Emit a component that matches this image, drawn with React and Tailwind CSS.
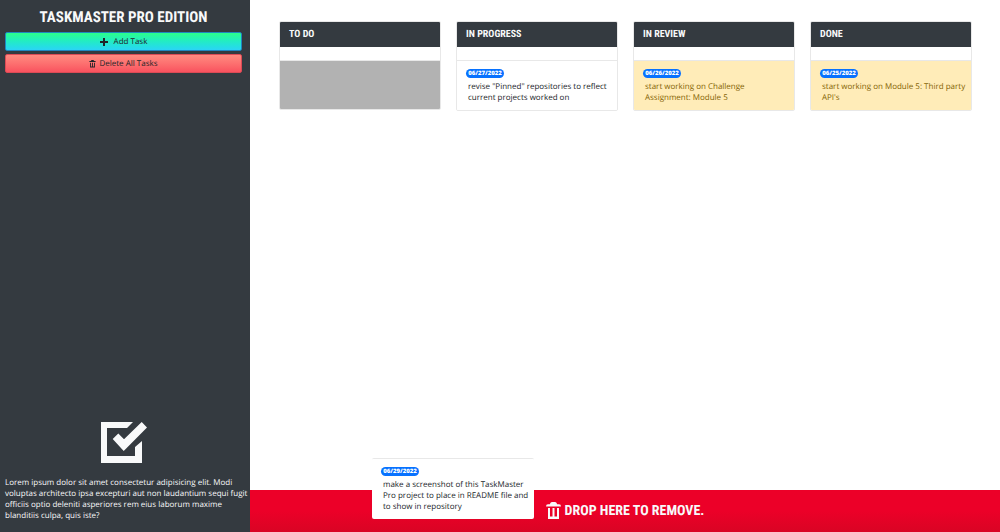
const DISPLAY = "font-['Roboto_Condensed','Liberation_Sans_Narrow','Liberation_Sans',sans-serif] font-bold uppercase";

function TrashIcon({ className }) {
  return (
    <svg viewBox="0 0 15 18" fill="currentColor" aria-hidden="true" className={className}>
      <path d="M0 4.4Q0 2.2 2 2.2H3.8Q4.6 0 6 0H9Q10.4 0 11.2 2.2H13Q15 2.2 15 4.4Z" />
      <path d="M2 6H4V14.5H6.5V6H8.5V14.5H11V6H13V17H2Z" />
    </svg>
  );
}

function PlusIcon({ className }) {
  return (
    <svg viewBox="0 0 8 8" fill="currentColor" aria-hidden="true" className={className}>
      <path d="M3 0H5V3H8V5H5V8H3V5H0V3H3Z" />
    </svg>
  );
}

function CheckIcon({ className }) {
  return (
    <svg viewBox="0 0 46 41" fill="currentColor" aria-hidden="true" className={className}>
      <path d="M0 0H32L26 6H6V34H34V25L41 19V41H0Z" />
      <path d="M40.7 0L46 5.5L22.7 29L11.7 17L17.3 11.5L23 17.2Z" />
    </svg>
  );
}

function Task({ date, text, due }) {
  return (
    <div className={`pt-2 pr-[3px] pb-[7px] pl-[9px] ${due ? "bg-[#ffecb8] text-[#856404]" : "bg-white text-[#212529]"}`}>
      <span className="flex h-[9px] w-[38px] items-center justify-center rounded-full bg-[#0872ff] text-[6px] font-extrabold text-white">
        {date}
      </span>
      <p className="mt-[3px] pl-[2px] text-[8px] leading-[11px]">{text}</p>
    </div>
  );
}

const columns = [
  { title: "To Do", tasks: [] },
  { title: "In Progress", tasks: [{ date: "06/27/2022", text: 'revise "Pinned" repositories to reflect current projects worked on' }] },
  { title: "In Review", tasks: [{ date: "06/26/2022", text: "start working on Challenge Assignment: Module 5", due: true }] },
  { title: "Done", tasks: [{ date: "06/25/2022", text: "start working on Module 5: Third party API's", due: true }] },
];

export default function App() {
  return (
    <div className="flex min-h-screen bg-white font-['Open_Sans',sans-serif] [text-rendering:geometricPrecision]">
      <aside className="flex w-1/4 shrink-0 flex-col bg-[#343a40] pt-[6px] pr-2 pb-[11px] pl-[5px] text-[#f8f9fa]">
        <h1 className={`text-center text-[15px] leading-[22px] whitespace-nowrap ${DISPLAY}`}>Taskmaster Pro Edition</h1>
        <div className="mt-1 flex flex-col gap-[3px] text-[8px] text-[#212529]">
          <button className="flex h-[19px] items-center justify-center gap-[6px] rounded-[2px] border border-[#1f86c0] bg-linear-to-b from-[#2cff88] to-[#2bd4f5] [text-rendering:geometricPrecision]">
            <PlusIcon className="size-2" />
            Add Task
          </button>
          <button className="flex h-[19px] items-center justify-center gap-[3px] rounded-[2px] border border-[#dc4a55] bg-linear-to-b from-[#ff8a80] to-[#f9525f] [text-rendering:geometricPrecision]">
            <TrashIcon className="h-2 w-[7px]" />
            Delete All Tasks
          </button>
        </div>
        <CheckIcon className="mt-auto h-[41px] w-[46px] self-center" />
        <p className="-mr-2 mt-[14px] text-[8px] leading-[11px]">
          Lorem ipsum dolor sit amet consectetur adipisicing elit. Modi voluptas architecto ipsa excepturi aut non
          laudantium sequi fugit officiis optio deleniti asperiores rem eius laborum maxime blanditiis culpa, quis iste?
        </p>
      </aside>

      <main className="relative flex min-w-0 flex-1 flex-col">
        <div className="grid grid-cols-4 items-start gap-[15px] pt-[21px] pr-7 pl-[29px]">
          {columns.map((c) => (
            <section key={c.title} className="overflow-hidden rounded-[2px] border border-[#e8e8e8]">
              <h2 className={`flex h-[25px] items-center bg-[#343a40] px-[9px] text-[10px] text-[#f8f9fa] ${DISPLAY}`}>
                {c.title}
              </h2>
              <div className="h-[14px] border-b border-[#e8e8e8]" />
              {c.tasks.length ? c.tasks.map((t) => <Task key={t.date} {...t} />) : <div className="h-12 bg-[#b2b2b2]" />}
            </section>
          ))}
        </div>

        <footer className={`mt-auto flex h-[42px] items-center justify-center gap-1 bg-linear-to-b from-[#ec0028] from-50% to-[#d90424] text-[14px] text-[#f8f9fa] ${DISPLAY}`}>
          <TrashIcon className="h-[18px] w-[15px]" />
          Drop here to remove.
        </footer>

        <div className="absolute bottom-[13px] left-[122px] w-[162px] overflow-hidden rounded-[2px] border-t border-[#e8e8e8]">
          <Task date="06/29/2022" text="make a screenshot of this TaskMaster Pro project to place in README file and to show in repository" />
        </div>
      </main>
    </div>
  );
}
